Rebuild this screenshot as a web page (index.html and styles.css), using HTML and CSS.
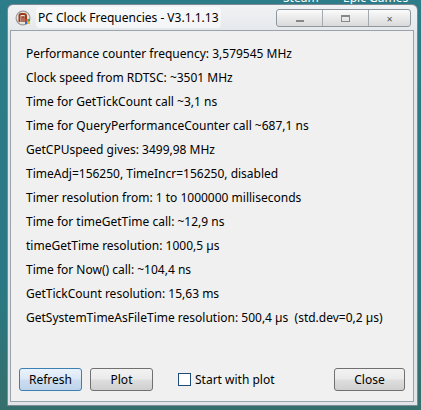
FILE: index.html
```html
<!DOCTYPE html>
<html lang="en">
<head>
  <meta charset="UTF-8">
  <title>PC Clock Frequencies</title>
  <link rel="stylesheet" href="styles.css">
</head>
<body>
  <div class="desk-label steam">Steam</div>
  <div class="desk-label epic">Epic Games</div>

  <div class="window">
    <div class="titlebar">
      <svg class="app-icon" width="16" height="16" viewBox="0 0 16 16">
        <circle cx="8" cy="8" r="7.5" fill="#9a9a9a"/>
        <circle cx="8" cy="8" r="6.3" fill="#e9e4dc"/>
        <path d="M4.5 12 V5.5 Q4.5 4 6 4 H9 Q11 4 11 6 V12" fill="none" stroke="#9b3a1e" stroke-width="2"/>
        <path d="M7 12 V7 H9 V12" fill="none" stroke="#9b3a1e" stroke-width="1.4"/>
        <rect x="10" y="9" width="2.5" height="2.5" fill="#e13b2a"/>
        <rect x="12.5" y="9" width="2.5" height="2.5" fill="#3aa53a"/>
        <rect x="10" y="11.5" width="2.5" height="2.5" fill="#2f6fd6"/>
        <rect x="12.5" y="11.5" width="2.5" height="2.5" fill="#f2c21b"/>
      </svg>
      <span class="title">PC Clock Frequencies - V3.1.1.13</span>
      <div class="caption-buttons">
        <div class="cap min"><span class="glyph-min"></span></div>
        <div class="cap max"><span class="glyph-max"></span></div>
        <div class="cap close">&#x2715;</div>
      </div>
    </div>

    <div class="client">
      <div class="info">
        <div class="line">Performance counter frequency: 3,579545 MHz</div>
        <div class="line">Clock speed from RDTSC: ~3501 MHz</div>
        <div class="line">Time for GetTickCount call ~3,1 ns</div>
        <div class="line">Time for QueryPerformanceCounter call ~687,1 ns</div>
        <div class="line">GetCPUspeed gives: 3499,98 MHz</div>
        <div class="line">TimeAdj=156250, TimeIncr=156250, disabled</div>
        <div class="line">Timer resolution from: 1 to 1000000 milliseconds</div>
        <div class="line">Time for timeGetTime call: ~12,9 ns</div>
        <div class="line">timeGetTime resolution: 1000,5 µs</div>
        <div class="line">Time for Now() call: ~104,4 ns</div>
        <div class="line">GetTickCount resolution: 15,63 ms</div>
        <div class="line">GetSystemTimeAsFileTime resolution: 500,4 µs&nbsp; (std.dev=0,2 µs)</div>
      </div>

      <div class="actions">
        <button class="btn default">Refresh</button>
        <button class="btn plot">Plot</button>
        <label class="check"><span class="box"></span>Start with plot</label>
        <button class="btn close-btn">Close</button>
      </div>
    </div>
  </div>
</body>
</html>
```

FILE: styles.css
```css
body {
  margin: 0;
  width: 421px;
  height: 410px;
  overflow: hidden;
  position: relative;
  background: linear-gradient(180deg, #2c7d89 0%, #2a7884 70%, #356f6c 100%);
  font-family: "Noto Sans", "DejaVu Sans", sans-serif;
  font-size: 12px;
  color: #000;
}

.desk-label {
  position: absolute;
  top: -11px;
  color: #fff;
  font-size: 12px;
}

.steam { left: 283px; }
.epic { left: 343px; }

.window {
  position: relative;
  margin: 4px 0 0 7px;
  width: 409px;
  height: 400px;
  border: 1px solid #7d8a95;
  border-radius: 6px 6px 0 0;
  background: linear-gradient(180deg, #f0f2f4 0%, #e4e7ea 30px, #e2e5e8 100%);
  display: flex;
  flex-direction: column;
}

.titlebar {
  height: 25px;
  display: flex;
  align-items: center;
  padding-left: 7px;
}

.app-icon {
  flex: none;
  margin-right: 5px;
}

.title {
  font-size: 12px;
  padding: 2px 2px;
  background: rgba(255, 255, 255, 0.55);
  border-radius: 4px;
}

.caption-buttons {
  margin-left: auto;
  margin-right: 6px;
  display: flex;
  height: 16px;
  border: 1px solid #8f979e;
  border-radius: 3px;
  background: linear-gradient(180deg, #fbfbfb 0%, #eaeaea 50%, #dadada 100%);
  align-self: flex-start;
  margin-top: 4px;
}

.cap {
  height: 16px;
  display: flex;
  align-items: center;
  justify-content: center;
  color: #555;
  font-size: 8px;
}

.min { width: 45px; border-right: 1px solid #a4a9ae; }
.max { width: 45px; border-right: 1px solid #a4a9ae; }
.close { width: 41px; font-weight: bold; }

.glyph-min {
  width: 8px;
  height: 2px;
  margin-top: 5px;
  background: #888;
}

.glyph-max {
  width: 7px;
  height: 4px;
  border: 1px solid #888;
  border-top-width: 2px;
}

.client {
  flex: 1;
  margin: 0 3px 3px 2px;
  border: 1px solid #9aa3ab;
  background: #f0f0f0;
  display: flex;
  flex-direction: column;
}

.info {
  padding: 11px 0 0 15px;
}

.line {
  height: 24px;
  line-height: 24px;
  white-space: nowrap;
}

.actions {
  margin-top: auto;
  margin-bottom: 10px;
  display: flex;
  align-items: center;
  padding: 0 8px 0 8px;
}

.btn {
  height: 23px;
  font-family: inherit;
  font-size: 12px;
  color: #000;
  border: 1px solid #707070;
  border-radius: 3px;
  background: linear-gradient(180deg, #f2f2f2 0%, #ebebeb 45%, #dddddd 55%, #cfcfcf 100%);
  padding: 0;
}

.default {
  width: 63px;
  border-color: #3c7fb1;
  background: linear-gradient(180deg, #eaf3fc 0%, #dbe8f6 45%, #cadcf0 55%, #bfd4ec 100%);
}

.plot {
  width: 63px;
  margin-left: 8px;
}

.check {
  display: flex;
  align-items: center;
  margin-left: 25px;
}

.box {
  width: 11px;
  height: 11px;
  border: 1px solid #1e4d7b;
  background: #fff;
  margin-right: 4px;
}

.close-btn {
  width: 71px;
  margin-left: auto;
}
```
